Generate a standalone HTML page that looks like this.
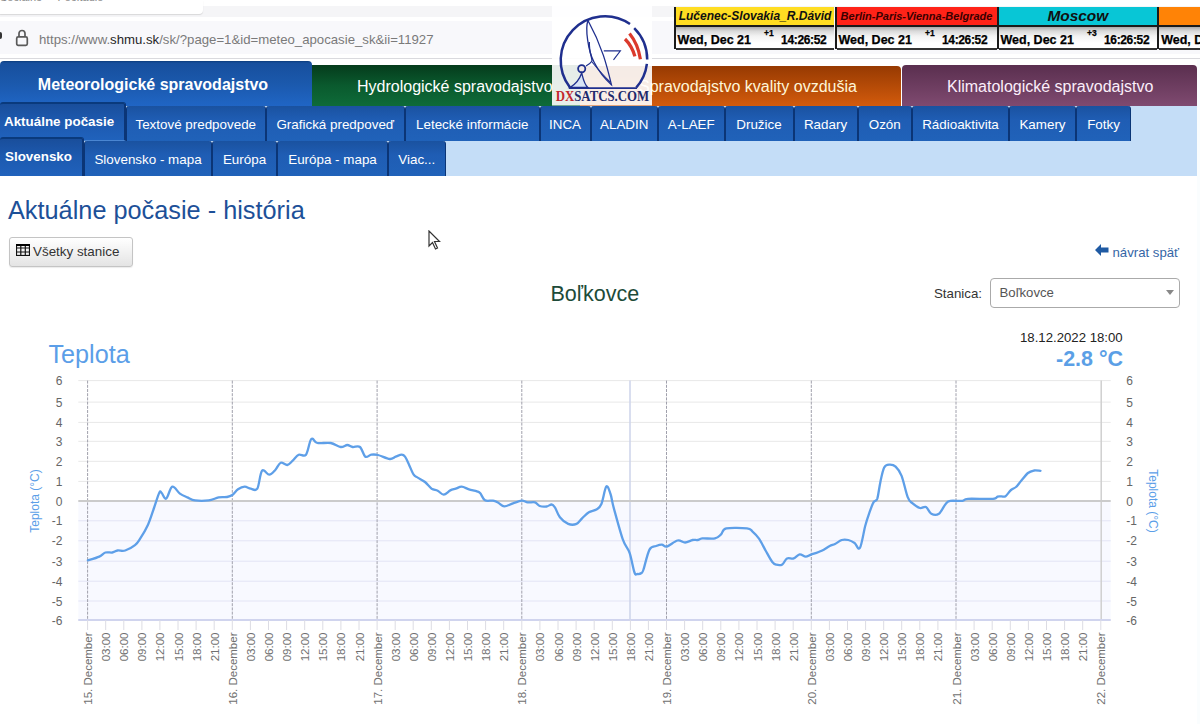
<!DOCTYPE html><html><head><meta charset="utf-8"><style>
*{box-sizing:border-box}
body{margin:0;width:1200px;height:724px;overflow:hidden;position:relative;background:#fff;font-family:"Liberation Sans", sans-serif}
.a{position:absolute;white-space:nowrap}
.tab{position:absolute;color:#fff;text-align:center;font-size:13.4px;line-height:37px;background:linear-gradient(#1a52a0,#1f5db4 40%,#2062b9);border-left:1px solid #0b3576;border-right:1px solid #0b3576;border-radius:3px 3px 0 0}
.tab.act{font-weight:bold;background:linear-gradient(#194e9b,#1d5ab0 50%,#2062bc);border-top:2px solid #0a3a7c;border-right:2px solid #0b3576}
.main{position:absolute;color:#fff;font-size:16px;border-radius:4px 4px 0 0}
.clk{position:absolute;top:7px;height:42px;border-left:2px solid #1a1a1a;font-weight:bold}
.clk .h{position:absolute;left:0;right:0;top:0;height:20px;border-bottom:2px solid #1a1a1a;font-style:italic;text-align:center;line-height:19px}
.clk .b{position:absolute;left:0;right:0;top:20px;height:22.5px;border-bottom:2px solid #333;background:linear-gradient(#a9a9a9,#d9d9d9 4px,#f2f2f2 9px,#fff 16px);font-size:12px}
.clk .b span{position:absolute;top:6.8px;line-height:13px;-webkit-text-stroke:0.25px #000}
</style></head><body>
<div class="a" style="left:0;top:6px;width:1200px;height:11px;background:#f5f5f7"></div>
<div class="a" style="left:0;top:0;width:203px;height:14px;background:#fff;border-radius:0 0 4px 0;box-shadow:0 1px 1px rgba(0,0,0,.12)"></div>
<div class="a" style="left:0;top:-9.5px;font-size:11px;color:#888">Sociálne &nbsp;&nbsp;&nbsp; Počítadlo</div>
<div class="a" style="left:0;top:21px;width:1200px;height:33px;background:#f8f8fb"></div>
<div class="a" style="left:0;top:58px;width:1200px;height:1px;background:#dadade"></div>
<div class="a" style="left:-1px;top:31.5px;width:2.5px;height:7px;border-radius:0 2px 2px 0;background:#333"></div>
<svg class="a" style="left:14px;top:29px" width="16" height="18" viewBox="0 0 16 18"><rect x="2.7" y="7.9" width="10.6" height="8.4" rx="1.5" fill="none" stroke="#5a5a5a" stroke-width="1.7"/><path d="M5 7.5V4.5a3 3 0 0 1 6 0v3" fill="none" stroke="#5a5a5a" stroke-width="1.7"/></svg>
<div class="a" style="left:39px;top:31px;font-size:13.2px;line-height:18px;color:#7a7a7a;letter-spacing:0px">https://www.<span style="color:#1f1f1f">shmu.sk</span>/sk/?page=1&amp;id=meteo_apocasie_sk&amp;ii=11927</div>
<div class="main" style="left:0;top:60.5px;width:312px;height:46px;background:linear-gradient(#0b3b7c,#174f9d 2px,#1b59ad 50%,#2066c6);font-weight:bold"><div class="a" style="left:0;width:306px;top:15.5px;text-align:center">Meteorologické spravodajstvo</div></div>
<div class="main" style="left:312px;top:65px;width:268px;height:41px;border-radius:0;background:linear-gradient(#053b1c,#0a5a2e 50%,#0e6b39)"><div class="a" style="left:45px;top:13px">Hydrologické spravodajstvo</div></div>
<div class="main" style="left:580px;top:65.5px;width:321px;height:40.5px;border-radius:0 4px 0 0;background:linear-gradient(#973a02,#d35b0c)"><div class="a" style="left:59px;top:12.5px;color:#fff6d8">Spravodajstvo kvality ovzdušia</div></div>
<div class="main" style="left:902px;top:65px;width:294.5px;height:41px;background:linear-gradient(#5a2f4f,#7f4a70)"><div class="a" style="left:45px;top:13px;color:#fbeefa">Klimatologické spravodajstvo</div></div>
<div class="a" style="left:0;top:106px;width:1196.5px;height:69.5px;background:#c4ddf7"></div>
<div class="tab act" style="left:0.0px;top:101.5px;width:125.7px;height:39.5px;line-height:35px;border-left:none;text-align:left;padding-left:4px;border-bottom:1.5px solid #4a86d2">Aktuálne počasie</div>
<div class="tab" style="left:126.0px;top:106px;width:139.5px;height:35px">Textové predpovede</div>
<div class="tab" style="left:265.5px;top:106px;width:139.5px;height:35px">Grafická predpoveď</div>
<div class="tab" style="left:405.0px;top:106px;width:134.5px;height:35px">Letecké informácie</div>
<div class="tab" style="left:539.5px;top:106px;width:51.0px;height:35px">INCA</div>
<div class="tab" style="left:590.5px;top:106px;width:67.5px;height:35px">ALADIN</div>
<div class="tab" style="left:658.0px;top:106px;width:66.5px;height:35px">A-LAEF</div>
<div class="tab" style="left:724.5px;top:106px;width:69.0px;height:35px">Družice</div>
<div class="tab" style="left:793.5px;top:106px;width:64.0px;height:35px">Radary</div>
<div class="tab" style="left:857.5px;top:106px;width:54.5px;height:35px">Ozón</div>
<div class="tab" style="left:912.0px;top:106px;width:97.0px;height:35px">Rádioaktivita</div>
<div class="tab" style="left:1009.0px;top:106px;width:67.0px;height:35px">Kamery</div>
<div class="tab" style="left:1076.0px;top:106px;width:55.0px;height:35px">Fotky</div>
<div class="tab act" style="left:0.0px;top:136.5px;width:84.0px;height:39px;line-height:36.5px;border-left:none;text-align:left;padding-left:5px">Slovensko</div>
<div class="tab" style="left:84.0px;top:141px;width:128.0px;height:34.5px">Slovensko - mapa</div>
<div class="tab" style="left:212.0px;top:141px;width:65.0px;height:34.5px">Európa</div>
<div class="tab" style="left:277.0px;top:141px;width:111.0px;height:34.5px">Európa - mapa</div>
<div class="tab" style="left:388.0px;top:141px;width:57.5px;height:34.5px">Viac...</div>
<svg class="a" style="left:552px;top:6px" width="100" height="100" viewBox="0 0 100 100">
<rect x="0" y="0" width="100" height="99.5" fill="#fff" fill-opacity="0.9"/>
<path d="M18 81.5 A44.2 44.2 0 0 1 78 18" fill="none" stroke="#1f2f8e" stroke-width="2.5"/>
<path d="M82.2 22.1 A44.2 44.2 0 0 1 95.2 53.5" fill="none" stroke="#1f2f8e" stroke-width="2.5"/>
<path d="M94.9 57.8 A44.2 44.2 0 0 1 84.3 81.5" fill="none" stroke="#1f2f8e" stroke-width="2.5"/>
<path d="M17 82.2 L85 82.2" stroke="#1f2f8e" stroke-width="1.8"/>
<path d="M77.5 27.5 Q86 38 88.4 53.2" fill="none" stroke="#db3a2c" stroke-width="3.2"/>
<path d="M73 33 Q80 40 82.9 50.4" fill="none" stroke="#db3a2c" stroke-width="3.2"/>
<path d="M36 14.5 C33 22 36 45 42 56 C47 66 53 73 59.4 78.7 C55 60 50 40 36 14.5Z" fill="none" stroke="#1f2f8e" stroke-width="1.3"/>
<path d="M51.8 44.9 L68.4 44.9 L61.5 53.9" fill="none" stroke="#1f2f8e" stroke-width="1.1"/>
<path d="M37.3 35.9 C37 45 40 52 40 55 C38 58 36 59 34 60" fill="none" stroke="#1f2f8e" stroke-width="1.3"/>
<path d="M40 56 C45 62 52 70 58 76" fill="none" stroke="#1f2f8e" stroke-width="1.1"/>
<circle cx="29.7" cy="62.8" r="3.6" fill="none" stroke="#1f2f8e" stroke-width="1.8"/>
<path d="M18 81.5 C24 78 28 72 29.7 67 C31 72 32 78 35.9 81.5Z" fill="#d8e4f6" stroke="#1f2f8e" stroke-width="1.3"/>
<text x="50.4" y="95.3" text-anchor="middle" font-family="Liberation Serif" font-weight="bold" font-size="14" textLength="93.5" lengthAdjust="spacingAndGlyphs"><tspan fill="#c3282e">DX</tspan><tspan fill="#1e2a6c">SATCS.COM</tspan></text>
</svg>
<div class="clk" style="left:673.6px;width:160.9px"><div class="h" style="background:#ffdd22;font-size:12px;color:#111">Lučenec-Slovakia_R.Dávid</div><div class="b"><span style="left:2px;font-size:12.5px">Wed, Dec 21</span><span style="left:88.5px;top:1.5px;font-size:8.5px;line-height:9px">+1</span><span style="left:105.5px;letter-spacing:-0.35px">14:26:52</span></div></div>
<div class="clk" style="left:834.5px;width:162.0px"><div class="h" style="background:#ff2318;font-size:11px;color:#3a0000">Berlin-Paris-Vienna-Belgrade</div><div class="b"><span style="left:2px;font-size:12.5px">Wed, Dec 21</span><span style="left:88.5px;top:1.5px;font-size:8.5px;line-height:9px">+1</span><span style="left:105.5px;letter-spacing:-0.35px">14:26:52</span></div></div>
<div class="clk" style="left:996.5px;width:160.7px"><div class="h" style="background:#08c6d6;font-size:15.4px;line-height:17px;color:#111">Moscow</div><div class="b"><span style="left:2px;font-size:12.5px">Wed, Dec 21</span><span style="left:88.5px;top:1.5px;font-size:8.5px;line-height:9px">+3</span><span style="left:105.5px;letter-spacing:-0.35px">16:26:52</span></div></div>
<div class="clk" style="left:1157.2px;width:162.8px"><div class="h" style="background:#ff8306;font-size:12px;color:#111"></div><div class="b"><span style="left:2px;font-size:12.5px">Wed, Dec 21</span><span style="left:88.5px;top:1.5px;font-size:8.5px;line-height:9px">+4</span><span style="left:105.5px;letter-spacing:-0.35px">17:26:52</span></div></div>
<div class="a" style="left:8px;top:195px;font-size:25.3px;line-height:30px;color:#1d5098">Aktuálne počasie - história</div>
<div class="a" style="left:9px;top:237px;width:124px;height:30px;border:1px solid #c4c4c4;border-radius:3px;background:linear-gradient(#fff,#e4e4e4);box-shadow:0 1px 1px rgba(0,0,0,.08)"></div>
<svg class="a" style="left:16px;top:244px" width="14" height="12" viewBox="0 0 14 12"><rect x="0.5" y="0.5" width="13" height="11" fill="none" stroke="#111" stroke-width="1.2"/><path d="M0 4H14M0 8H14M4.8 0V12M9.3 0V12" stroke="#111" stroke-width="1.2"/><rect x="0" y="0" width="14" height="2" fill="#000"/></svg>
<div class="a" style="left:33px;top:244px;font-size:13.4px;line-height:16px;color:#333">Všetky stanice</div>
<svg class="a" style="left:1095px;top:244px" width="14" height="12" viewBox="0 0 14 12"><path d="M0 6L6 0V3.5H13.5V8.5H6V12Z" fill="#1f5aa3"/></svg>
<div class="a" style="left:1112.5px;top:245px;font-size:13.2px;line-height:16px;color:#3566a6">návrat späť</div>
<div class="a" style="left:550.5px;top:280.5px;font-size:21.5px;line-height:26px;color:#1d4b39">Boľkovce</div>
<div class="a" style="left:934px;top:286px;font-size:13.3px;line-height:16px;color:#333">Stanica:</div>
<div class="a" style="left:990px;top:278px;width:190px;height:29.5px;border:1px solid #aaa;border-radius:4px;background:#fff"></div>
<div class="a" style="left:999.5px;top:284.5px;font-size:13.2px;line-height:16px;color:#555">Boľkovce</div>
<svg class="a" style="left:1166px;top:290px" width="8" height="5" viewBox="0 0 8 5"><path d="M0 0H8L4 5Z" fill="#888"/></svg>
<div class="a" style="left:48.5px;top:339.3px;font-size:25.2px;line-height:30px;color:#5b9ee8">Teplota</div>
<div class="a" style="left:1020px;top:330px;font-size:13.2px;line-height:16px;color:#222">18.12.2022 18:00</div>
<div class="a" style="left:1056px;top:346px;font-size:21.5px;line-height:26px;color:#5b9fe6;font-weight:bold">-2.8 °C</div>
<svg class="a" style="left:0;top:0" width="1200" height="724" viewBox="0 0 1200 724"><rect x="78.3" y="501" width="1032.4" height="119" fill="#f8f9ff"/><line x1="78.3" y1="380.6" x2="1110.7" y2="380.6" stroke="#e8e8e8" stroke-width="1"/><line x1="78.3" y1="402.1" x2="1110.7" y2="402.1" stroke="#e8e8e8" stroke-width="1"/><line x1="78.3" y1="422.4" x2="1110.7" y2="422.4" stroke="#e8e8e8" stroke-width="1"/><line x1="78.3" y1="441.3" x2="1110.7" y2="441.3" stroke="#e8e8e8" stroke-width="1"/><line x1="78.3" y1="461.3" x2="1110.7" y2="461.3" stroke="#e8e8e8" stroke-width="1"/><line x1="78.3" y1="481.4" x2="1110.7" y2="481.4" stroke="#e8e8e8" stroke-width="1"/><line x1="78.3" y1="520.8" x2="1110.7" y2="520.8" stroke="#e3e4f5" stroke-width="1"/><line x1="78.3" y1="540.8" x2="1110.7" y2="540.8" stroke="#e3e4f5" stroke-width="1"/><line x1="78.3" y1="561.2" x2="1110.7" y2="561.2" stroke="#e3e4f5" stroke-width="1"/><line x1="78.3" y1="581.2" x2="1110.7" y2="581.2" stroke="#e3e4f5" stroke-width="1"/><line x1="78.3" y1="601.0" x2="1110.7" y2="601.0" stroke="#e3e4f5" stroke-width="1"/><line x1="78.3" y1="620.0" x2="1110.7" y2="620.0" stroke="#e3e4f5" stroke-width="1"/><line x1="87.6" y1="380.6" x2="87.6" y2="620" stroke="#a0a0ac" stroke-width="1" stroke-dasharray="3,1.2"/><line x1="232.3" y1="380.6" x2="232.3" y2="620" stroke="#a0a0ac" stroke-width="1" stroke-dasharray="3,1.2"/><line x1="377.1" y1="380.6" x2="377.1" y2="620" stroke="#a0a0ac" stroke-width="1" stroke-dasharray="3,1.2"/><line x1="521.8" y1="380.6" x2="521.8" y2="620" stroke="#a0a0ac" stroke-width="1" stroke-dasharray="3,1.2"/><line x1="666.5" y1="380.6" x2="666.5" y2="620" stroke="#a0a0ac" stroke-width="1" stroke-dasharray="3,1.2"/><line x1="811.3" y1="380.6" x2="811.3" y2="620" stroke="#a0a0ac" stroke-width="1" stroke-dasharray="3,1.2"/><line x1="956.0" y1="380.6" x2="956.0" y2="620" stroke="#a0a0ac" stroke-width="1" stroke-dasharray="3,1.2"/><line x1="1101.2" y1="380.6" x2="1101.2" y2="620" stroke="#cfcfcf" stroke-width="1.5"/><line x1="630" y1="380.6" x2="630" y2="620" stroke="#ccd3ea" stroke-width="1.5"/><line x1="78.3" y1="501" x2="1110.7" y2="501" stroke="#cbcbcb" stroke-width="2"/><line x1="78.3" y1="620" x2="1110.7" y2="620" stroke="#d0d4ee" stroke-width="2"/><line x1="87.6" y1="620" x2="87.6" y2="630" stroke="#dcdce4" stroke-width="1"/><text x="0" y="0" transform="translate(88.1 632.5) rotate(-90)" text-anchor="end" dominant-baseline="central" font-family="Liberation Sans" font-size="11.5" fill="#707070">15. December</text><line x1="105.7" y1="620" x2="105.7" y2="630" stroke="#dcdce4" stroke-width="1"/><text x="0" y="0" transform="translate(106.2 632.5) rotate(-90)" text-anchor="end" dominant-baseline="central" font-family="Liberation Sans" font-size="11.5" fill="#707070">03:00</text><line x1="123.8" y1="620" x2="123.8" y2="630" stroke="#dcdce4" stroke-width="1"/><text x="0" y="0" transform="translate(124.3 632.5) rotate(-90)" text-anchor="end" dominant-baseline="central" font-family="Liberation Sans" font-size="11.5" fill="#707070">06:00</text><line x1="141.9" y1="620" x2="141.9" y2="630" stroke="#dcdce4" stroke-width="1"/><text x="0" y="0" transform="translate(142.4 632.5) rotate(-90)" text-anchor="end" dominant-baseline="central" font-family="Liberation Sans" font-size="11.5" fill="#707070">09:00</text><line x1="159.9" y1="620" x2="159.9" y2="630" stroke="#dcdce4" stroke-width="1"/><text x="0" y="0" transform="translate(160.4 632.5) rotate(-90)" text-anchor="end" dominant-baseline="central" font-family="Liberation Sans" font-size="11.5" fill="#707070">12:00</text><line x1="178.0" y1="620" x2="178.0" y2="630" stroke="#dcdce4" stroke-width="1"/><text x="0" y="0" transform="translate(178.5 632.5) rotate(-90)" text-anchor="end" dominant-baseline="central" font-family="Liberation Sans" font-size="11.5" fill="#707070">15:00</text><line x1="196.1" y1="620" x2="196.1" y2="630" stroke="#dcdce4" stroke-width="1"/><text x="0" y="0" transform="translate(196.6 632.5) rotate(-90)" text-anchor="end" dominant-baseline="central" font-family="Liberation Sans" font-size="11.5" fill="#707070">18:00</text><line x1="214.2" y1="620" x2="214.2" y2="630" stroke="#dcdce4" stroke-width="1"/><text x="0" y="0" transform="translate(214.7 632.5) rotate(-90)" text-anchor="end" dominant-baseline="central" font-family="Liberation Sans" font-size="11.5" fill="#707070">21:00</text><line x1="232.3" y1="620" x2="232.3" y2="630" stroke="#dcdce4" stroke-width="1"/><text x="0" y="0" transform="translate(232.8 632.5) rotate(-90)" text-anchor="end" dominant-baseline="central" font-family="Liberation Sans" font-size="11.5" fill="#707070">16. December</text><line x1="250.4" y1="620" x2="250.4" y2="630" stroke="#dcdce4" stroke-width="1"/><text x="0" y="0" transform="translate(250.9 632.5) rotate(-90)" text-anchor="end" dominant-baseline="central" font-family="Liberation Sans" font-size="11.5" fill="#707070">03:00</text><line x1="268.5" y1="620" x2="268.5" y2="630" stroke="#dcdce4" stroke-width="1"/><text x="0" y="0" transform="translate(269.0 632.5) rotate(-90)" text-anchor="end" dominant-baseline="central" font-family="Liberation Sans" font-size="11.5" fill="#707070">06:00</text><line x1="286.6" y1="620" x2="286.6" y2="630" stroke="#dcdce4" stroke-width="1"/><text x="0" y="0" transform="translate(287.1 632.5) rotate(-90)" text-anchor="end" dominant-baseline="central" font-family="Liberation Sans" font-size="11.5" fill="#707070">09:00</text><line x1="304.7" y1="620" x2="304.7" y2="630" stroke="#dcdce4" stroke-width="1"/><text x="0" y="0" transform="translate(305.2 632.5) rotate(-90)" text-anchor="end" dominant-baseline="central" font-family="Liberation Sans" font-size="11.5" fill="#707070">12:00</text><line x1="322.8" y1="620" x2="322.8" y2="630" stroke="#dcdce4" stroke-width="1"/><text x="0" y="0" transform="translate(323.3 632.5) rotate(-90)" text-anchor="end" dominant-baseline="central" font-family="Liberation Sans" font-size="11.5" fill="#707070">15:00</text><line x1="340.9" y1="620" x2="340.9" y2="630" stroke="#dcdce4" stroke-width="1"/><text x="0" y="0" transform="translate(341.4 632.5) rotate(-90)" text-anchor="end" dominant-baseline="central" font-family="Liberation Sans" font-size="11.5" fill="#707070">18:00</text><line x1="359.0" y1="620" x2="359.0" y2="630" stroke="#dcdce4" stroke-width="1"/><text x="0" y="0" transform="translate(359.5 632.5) rotate(-90)" text-anchor="end" dominant-baseline="central" font-family="Liberation Sans" font-size="11.5" fill="#707070">21:00</text><line x1="377.1" y1="620" x2="377.1" y2="630" stroke="#dcdce4" stroke-width="1"/><text x="0" y="0" transform="translate(377.6 632.5) rotate(-90)" text-anchor="end" dominant-baseline="central" font-family="Liberation Sans" font-size="11.5" fill="#707070">17. December</text><line x1="395.2" y1="620" x2="395.2" y2="630" stroke="#dcdce4" stroke-width="1"/><text x="0" y="0" transform="translate(395.7 632.5) rotate(-90)" text-anchor="end" dominant-baseline="central" font-family="Liberation Sans" font-size="11.5" fill="#707070">03:00</text><line x1="413.2" y1="620" x2="413.2" y2="630" stroke="#dcdce4" stroke-width="1"/><text x="0" y="0" transform="translate(413.7 632.5) rotate(-90)" text-anchor="end" dominant-baseline="central" font-family="Liberation Sans" font-size="11.5" fill="#707070">06:00</text><line x1="431.3" y1="620" x2="431.3" y2="630" stroke="#dcdce4" stroke-width="1"/><text x="0" y="0" transform="translate(431.8 632.5) rotate(-90)" text-anchor="end" dominant-baseline="central" font-family="Liberation Sans" font-size="11.5" fill="#707070">09:00</text><line x1="449.4" y1="620" x2="449.4" y2="630" stroke="#dcdce4" stroke-width="1"/><text x="0" y="0" transform="translate(449.9 632.5) rotate(-90)" text-anchor="end" dominant-baseline="central" font-family="Liberation Sans" font-size="11.5" fill="#707070">12:00</text><line x1="467.5" y1="620" x2="467.5" y2="630" stroke="#dcdce4" stroke-width="1"/><text x="0" y="0" transform="translate(468.0 632.5) rotate(-90)" text-anchor="end" dominant-baseline="central" font-family="Liberation Sans" font-size="11.5" fill="#707070">15:00</text><line x1="485.6" y1="620" x2="485.6" y2="630" stroke="#dcdce4" stroke-width="1"/><text x="0" y="0" transform="translate(486.1 632.5) rotate(-90)" text-anchor="end" dominant-baseline="central" font-family="Liberation Sans" font-size="11.5" fill="#707070">18:00</text><line x1="503.7" y1="620" x2="503.7" y2="630" stroke="#dcdce4" stroke-width="1"/><text x="0" y="0" transform="translate(504.2 632.5) rotate(-90)" text-anchor="end" dominant-baseline="central" font-family="Liberation Sans" font-size="11.5" fill="#707070">21:00</text><line x1="521.8" y1="620" x2="521.8" y2="630" stroke="#dcdce4" stroke-width="1"/><text x="0" y="0" transform="translate(522.3 632.5) rotate(-90)" text-anchor="end" dominant-baseline="central" font-family="Liberation Sans" font-size="11.5" fill="#707070">18. December</text><line x1="539.9" y1="620" x2="539.9" y2="630" stroke="#dcdce4" stroke-width="1"/><text x="0" y="0" transform="translate(540.4 632.5) rotate(-90)" text-anchor="end" dominant-baseline="central" font-family="Liberation Sans" font-size="11.5" fill="#707070">03:00</text><line x1="558.0" y1="620" x2="558.0" y2="630" stroke="#dcdce4" stroke-width="1"/><text x="0" y="0" transform="translate(558.5 632.5) rotate(-90)" text-anchor="end" dominant-baseline="central" font-family="Liberation Sans" font-size="11.5" fill="#707070">06:00</text><line x1="576.1" y1="620" x2="576.1" y2="630" stroke="#dcdce4" stroke-width="1"/><text x="0" y="0" transform="translate(576.6 632.5) rotate(-90)" text-anchor="end" dominant-baseline="central" font-family="Liberation Sans" font-size="11.5" fill="#707070">09:00</text><line x1="594.2" y1="620" x2="594.2" y2="630" stroke="#dcdce4" stroke-width="1"/><text x="0" y="0" transform="translate(594.7 632.5) rotate(-90)" text-anchor="end" dominant-baseline="central" font-family="Liberation Sans" font-size="11.5" fill="#707070">12:00</text><line x1="612.3" y1="620" x2="612.3" y2="630" stroke="#dcdce4" stroke-width="1"/><text x="0" y="0" transform="translate(612.8 632.5) rotate(-90)" text-anchor="end" dominant-baseline="central" font-family="Liberation Sans" font-size="11.5" fill="#707070">15:00</text><line x1="630.4" y1="620" x2="630.4" y2="630" stroke="#dcdce4" stroke-width="1"/><text x="0" y="0" transform="translate(630.9 632.5) rotate(-90)" text-anchor="end" dominant-baseline="central" font-family="Liberation Sans" font-size="11.5" fill="#707070">18:00</text><line x1="648.4" y1="620" x2="648.4" y2="630" stroke="#dcdce4" stroke-width="1"/><text x="0" y="0" transform="translate(648.9 632.5) rotate(-90)" text-anchor="end" dominant-baseline="central" font-family="Liberation Sans" font-size="11.5" fill="#707070">21:00</text><line x1="666.5" y1="620" x2="666.5" y2="630" stroke="#dcdce4" stroke-width="1"/><text x="0" y="0" transform="translate(667.0 632.5) rotate(-90)" text-anchor="end" dominant-baseline="central" font-family="Liberation Sans" font-size="11.5" fill="#707070">19. December</text><line x1="684.6" y1="620" x2="684.6" y2="630" stroke="#dcdce4" stroke-width="1"/><text x="0" y="0" transform="translate(685.1 632.5) rotate(-90)" text-anchor="end" dominant-baseline="central" font-family="Liberation Sans" font-size="11.5" fill="#707070">03:00</text><line x1="702.7" y1="620" x2="702.7" y2="630" stroke="#dcdce4" stroke-width="1"/><text x="0" y="0" transform="translate(703.2 632.5) rotate(-90)" text-anchor="end" dominant-baseline="central" font-family="Liberation Sans" font-size="11.5" fill="#707070">06:00</text><line x1="720.8" y1="620" x2="720.8" y2="630" stroke="#dcdce4" stroke-width="1"/><text x="0" y="0" transform="translate(721.3 632.5) rotate(-90)" text-anchor="end" dominant-baseline="central" font-family="Liberation Sans" font-size="11.5" fill="#707070">09:00</text><line x1="738.9" y1="620" x2="738.9" y2="630" stroke="#dcdce4" stroke-width="1"/><text x="0" y="0" transform="translate(739.4 632.5) rotate(-90)" text-anchor="end" dominant-baseline="central" font-family="Liberation Sans" font-size="11.5" fill="#707070">12:00</text><line x1="757.0" y1="620" x2="757.0" y2="630" stroke="#dcdce4" stroke-width="1"/><text x="0" y="0" transform="translate(757.5 632.5) rotate(-90)" text-anchor="end" dominant-baseline="central" font-family="Liberation Sans" font-size="11.5" fill="#707070">15:00</text><line x1="775.1" y1="620" x2="775.1" y2="630" stroke="#dcdce4" stroke-width="1"/><text x="0" y="0" transform="translate(775.6 632.5) rotate(-90)" text-anchor="end" dominant-baseline="central" font-family="Liberation Sans" font-size="11.5" fill="#707070">18:00</text><line x1="793.2" y1="620" x2="793.2" y2="630" stroke="#dcdce4" stroke-width="1"/><text x="0" y="0" transform="translate(793.7 632.5) rotate(-90)" text-anchor="end" dominant-baseline="central" font-family="Liberation Sans" font-size="11.5" fill="#707070">21:00</text><line x1="811.3" y1="620" x2="811.3" y2="630" stroke="#dcdce4" stroke-width="1"/><text x="0" y="0" transform="translate(811.8 632.5) rotate(-90)" text-anchor="end" dominant-baseline="central" font-family="Liberation Sans" font-size="11.5" fill="#707070">20. December</text><line x1="829.4" y1="620" x2="829.4" y2="630" stroke="#dcdce4" stroke-width="1"/><text x="0" y="0" transform="translate(829.9 632.5) rotate(-90)" text-anchor="end" dominant-baseline="central" font-family="Liberation Sans" font-size="11.5" fill="#707070">03:00</text><line x1="847.5" y1="620" x2="847.5" y2="630" stroke="#dcdce4" stroke-width="1"/><text x="0" y="0" transform="translate(848.0 632.5) rotate(-90)" text-anchor="end" dominant-baseline="central" font-family="Liberation Sans" font-size="11.5" fill="#707070">06:00</text><line x1="865.6" y1="620" x2="865.6" y2="630" stroke="#dcdce4" stroke-width="1"/><text x="0" y="0" transform="translate(866.1 632.5) rotate(-90)" text-anchor="end" dominant-baseline="central" font-family="Liberation Sans" font-size="11.5" fill="#707070">09:00</text><line x1="883.7" y1="620" x2="883.7" y2="630" stroke="#dcdce4" stroke-width="1"/><text x="0" y="0" transform="translate(884.2 632.5) rotate(-90)" text-anchor="end" dominant-baseline="central" font-family="Liberation Sans" font-size="11.5" fill="#707070">12:00</text><line x1="901.7" y1="620" x2="901.7" y2="630" stroke="#dcdce4" stroke-width="1"/><text x="0" y="0" transform="translate(902.2 632.5) rotate(-90)" text-anchor="end" dominant-baseline="central" font-family="Liberation Sans" font-size="11.5" fill="#707070">15:00</text><line x1="919.8" y1="620" x2="919.8" y2="630" stroke="#dcdce4" stroke-width="1"/><text x="0" y="0" transform="translate(920.3 632.5) rotate(-90)" text-anchor="end" dominant-baseline="central" font-family="Liberation Sans" font-size="11.5" fill="#707070">18:00</text><line x1="937.9" y1="620" x2="937.9" y2="630" stroke="#dcdce4" stroke-width="1"/><text x="0" y="0" transform="translate(938.4 632.5) rotate(-90)" text-anchor="end" dominant-baseline="central" font-family="Liberation Sans" font-size="11.5" fill="#707070">21:00</text><line x1="956.0" y1="620" x2="956.0" y2="630" stroke="#dcdce4" stroke-width="1"/><text x="0" y="0" transform="translate(956.5 632.5) rotate(-90)" text-anchor="end" dominant-baseline="central" font-family="Liberation Sans" font-size="11.5" fill="#707070">21. December</text><line x1="974.1" y1="620" x2="974.1" y2="630" stroke="#dcdce4" stroke-width="1"/><text x="0" y="0" transform="translate(974.6 632.5) rotate(-90)" text-anchor="end" dominant-baseline="central" font-family="Liberation Sans" font-size="11.5" fill="#707070">03:00</text><line x1="992.2" y1="620" x2="992.2" y2="630" stroke="#dcdce4" stroke-width="1"/><text x="0" y="0" transform="translate(992.7 632.5) rotate(-90)" text-anchor="end" dominant-baseline="central" font-family="Liberation Sans" font-size="11.5" fill="#707070">06:00</text><line x1="1010.3" y1="620" x2="1010.3" y2="630" stroke="#dcdce4" stroke-width="1"/><text x="0" y="0" transform="translate(1010.8 632.5) rotate(-90)" text-anchor="end" dominant-baseline="central" font-family="Liberation Sans" font-size="11.5" fill="#707070">09:00</text><line x1="1028.4" y1="620" x2="1028.4" y2="630" stroke="#dcdce4" stroke-width="1"/><text x="0" y="0" transform="translate(1028.9 632.5) rotate(-90)" text-anchor="end" dominant-baseline="central" font-family="Liberation Sans" font-size="11.5" fill="#707070">12:00</text><line x1="1046.5" y1="620" x2="1046.5" y2="630" stroke="#dcdce4" stroke-width="1"/><text x="0" y="0" transform="translate(1047.0 632.5) rotate(-90)" text-anchor="end" dominant-baseline="central" font-family="Liberation Sans" font-size="11.5" fill="#707070">15:00</text><line x1="1064.6" y1="620" x2="1064.6" y2="630" stroke="#dcdce4" stroke-width="1"/><text x="0" y="0" transform="translate(1065.1 632.5) rotate(-90)" text-anchor="end" dominant-baseline="central" font-family="Liberation Sans" font-size="11.5" fill="#707070">18:00</text><line x1="1082.7" y1="620" x2="1082.7" y2="630" stroke="#dcdce4" stroke-width="1"/><text x="0" y="0" transform="translate(1083.2 632.5) rotate(-90)" text-anchor="end" dominant-baseline="central" font-family="Liberation Sans" font-size="11.5" fill="#707070">21:00</text><line x1="1100.8" y1="620" x2="1100.8" y2="630" stroke="#dcdce4" stroke-width="1"/><text x="0" y="0" transform="translate(1101.3 632.5) rotate(-90)" text-anchor="end" dominant-baseline="central" font-family="Liberation Sans" font-size="11.5" fill="#707070">22. December</text><text x="62.5" y="381.2" text-anchor="end" dominant-baseline="central" font-family="Liberation Sans" font-size="12" fill="#666">6</text><text x="1126.3" y="381.2" text-anchor="start" dominant-baseline="central" font-family="Liberation Sans" font-size="12" fill="#666">6</text><text x="62.5" y="402.7" text-anchor="end" dominant-baseline="central" font-family="Liberation Sans" font-size="12" fill="#666">5</text><text x="1126.3" y="402.7" text-anchor="start" dominant-baseline="central" font-family="Liberation Sans" font-size="12" fill="#666">5</text><text x="62.5" y="423.0" text-anchor="end" dominant-baseline="central" font-family="Liberation Sans" font-size="12" fill="#666">4</text><text x="1126.3" y="423.0" text-anchor="start" dominant-baseline="central" font-family="Liberation Sans" font-size="12" fill="#666">4</text><text x="62.5" y="441.9" text-anchor="end" dominant-baseline="central" font-family="Liberation Sans" font-size="12" fill="#666">3</text><text x="1126.3" y="441.9" text-anchor="start" dominant-baseline="central" font-family="Liberation Sans" font-size="12" fill="#666">3</text><text x="62.5" y="461.9" text-anchor="end" dominant-baseline="central" font-family="Liberation Sans" font-size="12" fill="#666">2</text><text x="1126.3" y="461.9" text-anchor="start" dominant-baseline="central" font-family="Liberation Sans" font-size="12" fill="#666">2</text><text x="62.5" y="482.0" text-anchor="end" dominant-baseline="central" font-family="Liberation Sans" font-size="12" fill="#666">1</text><text x="1126.3" y="482.0" text-anchor="start" dominant-baseline="central" font-family="Liberation Sans" font-size="12" fill="#666">1</text><text x="62.5" y="501.6" text-anchor="end" dominant-baseline="central" font-family="Liberation Sans" font-size="12" fill="#666">0</text><text x="1126.3" y="501.6" text-anchor="start" dominant-baseline="central" font-family="Liberation Sans" font-size="12" fill="#666">0</text><text x="62.5" y="521.4" text-anchor="end" dominant-baseline="central" font-family="Liberation Sans" font-size="12" fill="#666">-1</text><text x="1126.3" y="521.4" text-anchor="start" dominant-baseline="central" font-family="Liberation Sans" font-size="12" fill="#666">-1</text><text x="62.5" y="541.4" text-anchor="end" dominant-baseline="central" font-family="Liberation Sans" font-size="12" fill="#666">-2</text><text x="1126.3" y="541.4" text-anchor="start" dominant-baseline="central" font-family="Liberation Sans" font-size="12" fill="#666">-2</text><text x="62.5" y="561.8" text-anchor="end" dominant-baseline="central" font-family="Liberation Sans" font-size="12" fill="#666">-3</text><text x="1126.3" y="561.8" text-anchor="start" dominant-baseline="central" font-family="Liberation Sans" font-size="12" fill="#666">-3</text><text x="62.5" y="581.8" text-anchor="end" dominant-baseline="central" font-family="Liberation Sans" font-size="12" fill="#666">-4</text><text x="1126.3" y="581.8" text-anchor="start" dominant-baseline="central" font-family="Liberation Sans" font-size="12" fill="#666">-4</text><text x="62.5" y="601.6" text-anchor="end" dominant-baseline="central" font-family="Liberation Sans" font-size="12" fill="#666">-5</text><text x="1126.3" y="601.6" text-anchor="start" dominant-baseline="central" font-family="Liberation Sans" font-size="12" fill="#666">-5</text><text x="62.5" y="620.6" text-anchor="end" dominant-baseline="central" font-family="Liberation Sans" font-size="12" fill="#666">-6</text><text x="1126.3" y="620.6" text-anchor="start" dominant-baseline="central" font-family="Liberation Sans" font-size="12" fill="#666">-6</text><text transform="translate(35.3 501) rotate(-90)" text-anchor="middle" dominant-baseline="central" font-family="Liberation Sans" font-size="12" fill="#5b9ee8">Teplota (°C)</text><text transform="translate(1152.5 501) rotate(90)" text-anchor="middle" dominant-baseline="central" font-family="Liberation Sans" font-size="12" fill="#5b9ee8">Teplota (°C)</text><path d="M87.9 560.4 C89.8 559.8 96.4 557.9 99.3 556.6 C102.2 555.3 103.2 553.2 105.4 552.5 C107.6 551.8 110.2 552.8 112.2 552.5 C114.2 552.2 115.4 550.8 117.6 550.5 C119.8 550.2 122.3 551.4 125.2 550.5 C128.1 549.6 132.5 547.2 135.0 545.2 C137.5 543.2 138.1 541.8 140.3 538.4 C142.5 535.0 145.7 529.8 148.0 524.7 C150.3 519.6 152.1 513.3 154.0 508.0 C155.9 502.7 158.0 495.3 159.3 492.8 C160.6 490.3 160.4 491.8 161.6 492.8 C162.8 493.8 164.4 499.6 166.2 498.6 C168.0 497.6 170.0 487.5 172.3 486.7 C174.6 485.9 177.4 491.8 179.9 493.6 C182.4 495.4 185.0 496.3 187.5 497.4 C190.0 498.5 191.5 499.9 195.0 500.4 C198.5 500.9 204.8 500.9 208.7 500.4 C212.6 499.9 215.5 498.0 218.6 497.4 C221.7 496.8 224.7 497.4 227.0 497.0 C229.3 496.6 230.5 496.3 232.3 495.0 C234.1 493.7 235.9 490.7 238.0 489.3 C240.1 487.9 242.6 486.8 244.7 486.7 C246.8 486.6 248.6 488.4 250.7 488.7 C252.8 489.0 255.4 491.7 257.3 488.7 C259.2 485.7 260.0 473.0 262.0 470.7 C264.0 468.4 267.1 474.8 269.3 474.7 C271.5 474.6 273.4 472.0 275.3 470.0 C277.2 468.0 278.7 463.5 280.7 462.7 C282.7 461.9 285.3 465.3 287.3 465.0 C289.3 464.7 290.8 462.4 292.7 460.7 C294.6 459.0 296.5 455.7 298.7 454.7 C300.9 453.7 303.9 457.3 306.0 454.7 C308.1 452.1 309.4 440.9 311.3 439.0 C313.2 437.1 314.1 442.3 317.3 443.0 C320.5 443.7 326.8 442.3 330.7 443.0 C334.6 443.7 337.9 446.7 340.7 447.0 C343.5 447.3 345.3 445.0 347.3 445.0 C349.3 445.0 350.6 446.7 352.7 447.0 C354.8 447.3 357.9 445.4 360.0 447.0 C362.1 448.6 363.4 455.4 365.3 456.7 C367.2 458.0 369.2 455.0 371.3 454.7 C373.4 454.4 374.9 454.3 378.0 455.0 C381.1 455.7 386.8 458.7 389.7 459.0 C392.6 459.3 393.7 457.4 395.7 456.7 C397.7 456.0 400.1 454.7 401.7 454.7 C403.2 454.7 403.8 455.0 405.0 456.7 C406.2 458.4 407.6 461.7 409.0 464.7 C410.4 467.7 412.2 472.5 413.7 474.7 C415.1 476.9 415.8 476.4 417.7 477.6 C419.6 478.8 422.7 480.1 425.0 482.0 C427.3 483.9 429.6 487.2 431.7 488.7 C433.8 490.1 435.7 489.7 437.7 490.7 C439.7 491.7 441.6 494.8 443.7 494.7 C445.8 494.6 448.3 491.4 450.3 490.4 C452.3 489.4 453.8 489.3 455.7 488.7 C457.6 488.1 459.5 486.6 461.7 486.7 C463.9 486.8 466.4 488.5 469.0 489.3 C471.6 490.1 475.1 490.6 477.0 491.3 C478.9 492.0 479.0 491.8 480.3 493.3 C481.6 494.8 482.9 499.1 485.0 500.3 C487.1 501.5 490.8 500.3 493.0 500.7 C495.2 501.1 496.4 501.8 498.3 502.7 C500.2 503.6 501.9 506.3 504.3 506.4 C506.8 506.5 510.1 504.2 513.0 503.3 C515.9 502.4 519.2 500.9 521.7 500.7 C524.2 500.5 525.5 502.1 527.7 502.4 C529.9 502.7 533.0 501.8 535.0 502.4 C537.0 503.0 537.8 505.3 539.7 506.0 C541.6 506.7 544.6 506.8 546.6 506.5 C548.6 506.2 550.2 504.4 551.6 504.5 C553.0 504.6 553.5 505.2 554.9 507.3 C556.3 509.4 557.7 514.5 559.9 517.3 C562.1 520.1 565.4 522.8 568.2 523.9 C571.0 525.0 574.1 524.9 576.5 523.9 C578.9 522.9 580.2 520.0 582.3 518.1 C584.4 516.2 586.5 513.7 588.9 512.3 C591.2 510.9 594.3 510.9 596.4 509.5 C598.5 508.1 599.8 507.8 601.4 504.0 C603.0 500.2 604.8 488.3 606.3 486.6 C607.8 484.9 609.2 490.4 610.5 494.0 C611.8 497.6 611.7 500.5 613.8 508.1 C615.9 515.7 620.3 532.2 622.9 539.7 C625.5 547.2 627.7 547.4 629.6 552.9 C631.5 558.4 633.2 569.0 634.5 572.5 C635.8 576.0 636.3 573.9 637.5 574.0 C638.7 574.1 640.5 573.8 641.5 573.0 C642.5 572.2 642.2 573.4 643.5 569.5 C644.8 565.6 647.4 553.5 649.5 549.6 C651.6 545.7 654.0 546.8 656.1 546.0 C658.2 545.2 660.1 544.5 661.9 544.6 C663.7 544.7 664.3 547.3 666.9 546.6 C669.5 545.9 674.6 541.2 677.6 540.5 C680.6 539.8 682.6 542.6 685.1 542.5 C687.6 542.4 690.5 540.4 692.6 540.0 C694.7 539.6 696.1 540.3 697.7 540.0 C699.3 539.7 699.4 538.7 702.3 538.4 C705.2 538.1 711.9 539.1 715.0 538.4 C718.1 537.7 719.1 536.1 721.0 534.4 C722.9 532.7 722.0 529.4 726.3 528.4 C730.6 527.4 742.7 527.9 747.0 528.4 C751.3 528.9 750.3 529.6 752.3 531.3 C754.3 533.0 756.8 535.5 759.0 538.7 C761.2 541.9 763.5 546.8 765.7 550.7 C767.9 554.6 770.5 559.7 772.3 562.0 C774.1 564.3 774.6 564.3 776.3 564.7 C778.0 565.1 780.5 565.5 782.3 564.4 C784.1 563.3 785.1 559.4 787.0 558.4 C788.9 557.4 791.6 559.1 793.7 558.4 C795.8 557.7 797.7 554.7 799.7 554.4 C801.7 554.1 803.8 556.7 805.7 556.7 C807.6 556.8 808.3 555.7 811.0 554.7 C813.7 553.7 818.6 552.2 821.7 550.7 C824.8 549.2 827.5 547.1 829.7 546.0 C831.9 544.9 833.0 545.0 835.0 544.0 C837.0 543.0 839.5 540.7 841.7 540.0 C843.9 539.3 846.1 539.5 848.3 540.0 C850.4 540.5 852.7 541.7 854.6 543.0 C856.5 544.3 858.1 550.8 859.9 548.0 C861.7 545.2 863.7 531.7 865.2 526.0 C866.7 520.3 867.6 517.7 869.0 513.8 C870.4 509.9 872.1 504.9 873.5 502.4 C874.9 499.9 876.1 502.0 877.3 498.6 C878.4 495.2 879.2 487.1 880.4 481.9 C881.5 476.7 882.7 470.4 884.2 467.5 C885.7 464.6 887.6 464.8 889.5 464.7 C891.4 464.6 893.6 464.8 895.6 466.7 C897.6 468.6 899.6 470.7 901.6 475.8 C903.6 480.9 905.9 492.5 907.7 497.1 C909.5 501.7 910.3 501.4 912.3 503.2 C914.3 505.0 917.6 507.4 919.9 508.0 C922.2 508.6 924.1 506.0 926.0 507.0 C927.9 508.0 929.1 512.7 931.3 513.8 C933.4 514.9 936.5 515.4 938.9 513.8 C941.3 512.1 943.8 506.0 945.7 503.9 C947.6 501.8 947.5 501.4 950.3 500.9 C953.1 500.4 959.4 501.2 962.4 500.9 C965.4 500.5 962.9 499.1 968.0 498.8 C973.1 498.5 988.1 499.2 993.0 498.8 C997.9 498.4 996.1 497.0 997.5 496.6 C998.9 496.2 1000.2 496.5 1001.5 496.4 C1002.8 496.3 1003.9 497.3 1005.5 496.2 C1007.1 495.1 1009.2 491.5 1011.0 490.0 C1012.8 488.5 1014.3 488.5 1016.0 487.0 C1017.7 485.5 1019.0 483.3 1021.0 481.0 C1023.0 478.7 1025.8 474.8 1028.0 473.0 C1030.2 471.2 1031.9 470.9 1034.0 470.5 C1036.1 470.1 1039.4 470.8 1040.5 470.8" fill="none" stroke="#5e9fe8" stroke-width="2.3" stroke-linejoin="round" stroke-linecap="round"/></svg>
<svg class="a" style="left:428px;top:230px" width="14" height="20" viewBox="0 0 14 20"><path d="M1 1V16L4.5 12.5L7.5 19L9.5 18L6.5 11.5H11.5Z" fill="#fff" stroke="#333" stroke-width="1.2"/></svg>
<div class="a" style="left:1196.5px;top:60px;width:3.5px;height:664px;background:#fafdfe"></div>
</body></html>
